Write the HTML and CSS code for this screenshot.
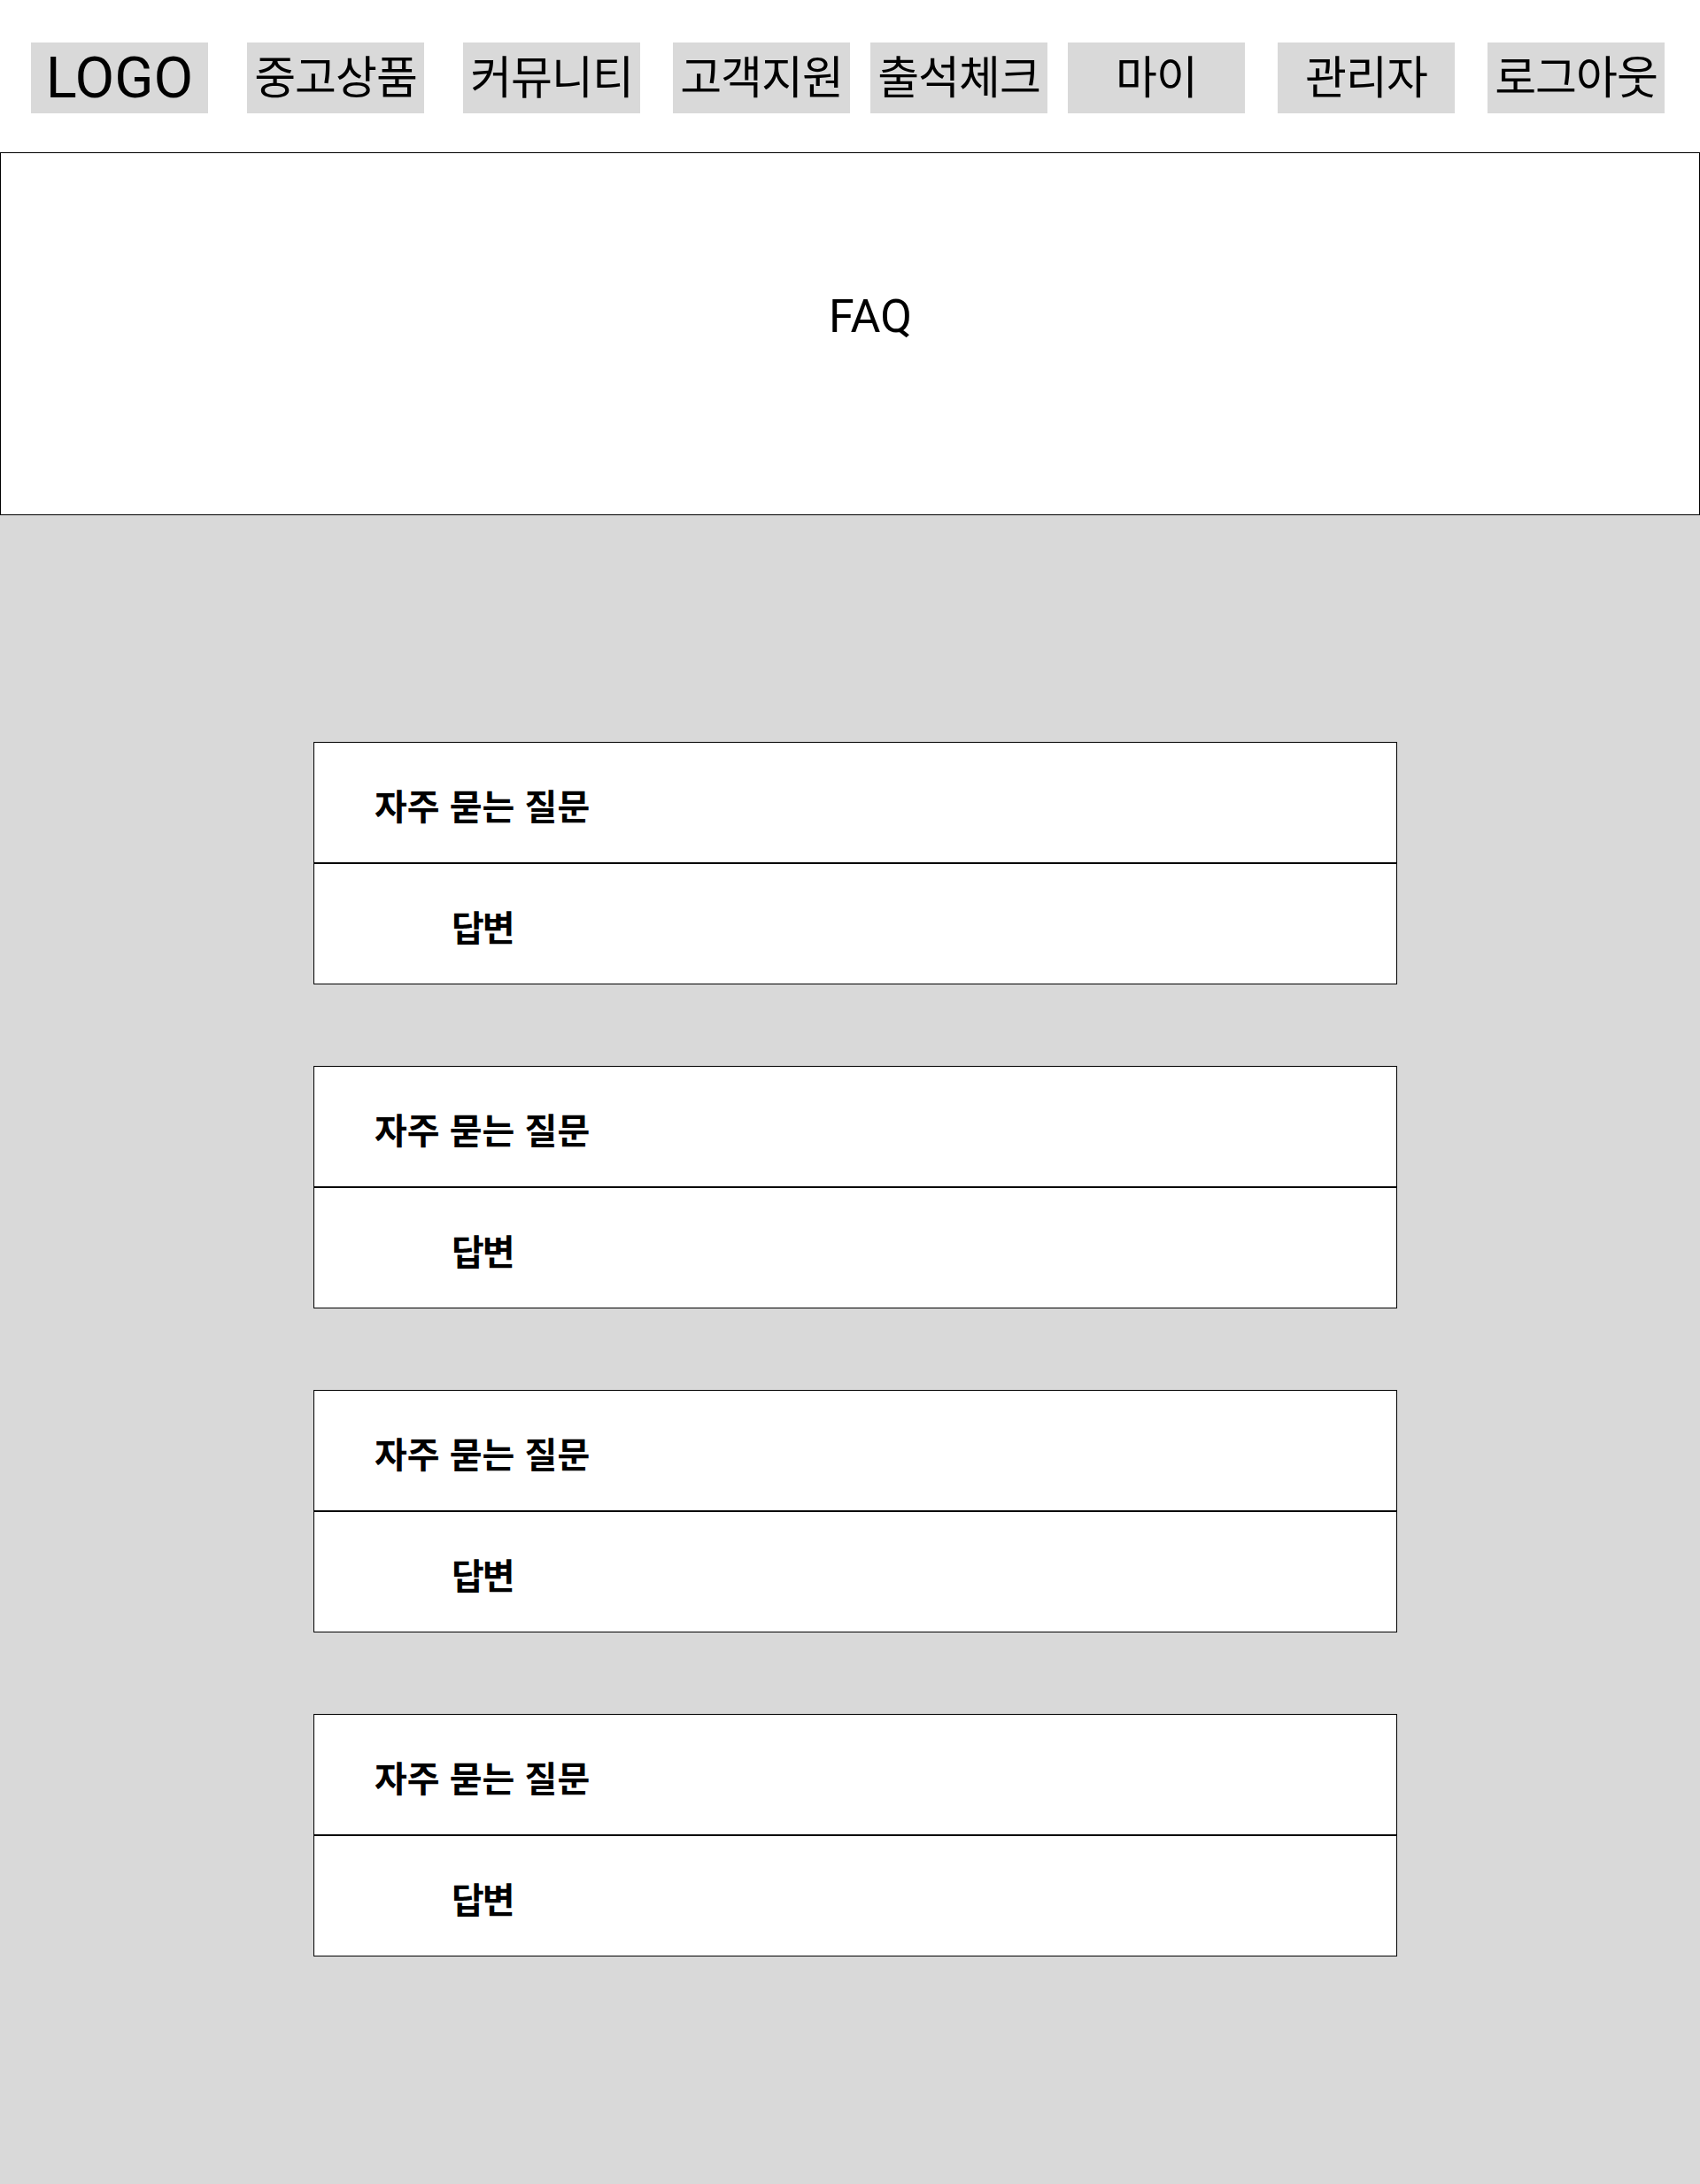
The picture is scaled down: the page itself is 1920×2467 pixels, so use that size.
FILE: index.html
```html
<!DOCTYPE html>
<html lang="ko">
<head>
<meta charset="utf-8">
<title>FAQ</title>
<link rel="stylesheet" href="styles.css">
</head>
<body>
  <nav class="topnav">
    <a class="nav-item nav-logo">LOGO</a>
    <a class="nav-item gap-lg">중고상품</a>
    <a class="nav-item gap-lg">커뮤니티</a>
    <a class="nav-item gap-md">고객지원</a>
    <a class="nav-item gap-sm">출석체크</a>
    <a class="nav-item gap-sm">마이</a>
    <a class="nav-item gap-md">관리자</a>
    <a class="nav-item gap-md">로그아웃</a>
  </nav>
  <header class="page-title">
    <h1 class="page-title-text">FAQ</h1>
  </header>
  <main class="faq-area">
    <div class="faq-list">
      <section class="faq-card">
        <div class="faq-row faq-q">자주 묻는 질문</div>
        <div class="faq-row faq-a">답변</div>
      </section>
      <section class="faq-card">
        <div class="faq-row faq-q">자주 묻는 질문</div>
        <div class="faq-row faq-a">답변</div>
      </section>
      <section class="faq-card">
        <div class="faq-row faq-q">자주 묻는 질문</div>
        <div class="faq-row faq-a">답변</div>
      </section>
      <section class="faq-card">
        <div class="faq-row faq-q">자주 묻는 질문</div>
        <div class="faq-row faq-a">답변</div>
      </section>
    </div>
  </main>
</body>
</html>
```

FILE: styles.css
```css
* {
  box-sizing: border-box;
}

html, body {
  margin: 0;
  padding: 0;
}

body {
  min-height: 100vh;
  display: flex;
  flex-direction: column;
  background: #ffffff;
  color: #000000;
  font-family: Roboto, "Noto Sans CJK KR", sans-serif;
}

.topnav {
  display: flex;
  align-items: flex-start;
  height: 172px;
  padding: 48px 0 0 35px;
  background: #ffffff;
}

.nav-item {
  width: 200px;
  height: 80px;
  flex: 0 0 200px;
  display: flex;
  align-items: center;
  justify-content: center;
  background: #d9d9d9;
  color: #000000;
  font-size: 51px;
  letter-spacing: -1px;
  line-height: 1;
  text-decoration: none;
}

.nav-logo {
  font-size: 65px;
  letter-spacing: 0;
}

.gap-lg { margin-left: 44px; }
.gap-md { margin-left: 37px; }
.gap-sm { margin-left: 23px; }

.page-title {
  height: 410px;
  border: 1px solid #000000;
  background: #ffffff;
  padding: 159px 0 0 46px;
}

.page-title-text {
  margin: 0;
  font-size: 52px;
  font-weight: 400;
  line-height: 1;
  text-align: center;
}

.faq-area {
  flex: 1;
  background: #d9d9d9;
  padding: 256px 0 120px 354px;
}

.faq-list {
  width: 1224px;
  display: flex;
  flex-direction: column;
  gap: 92px;
}

.faq-card {
  display: flex;
  flex-direction: column;
}

.faq-row {
  height: 137px;
  display: flex;
  align-items: center;
  background: #ffffff;
  border: 1px solid #000000;
  font-family: "Noto Sans CJK KR", sans-serif;
  font-size: 40px;
  font-weight: 700;
  letter-spacing: 0;
  line-height: 1;
  padding-top: 4px;
}

.faq-q {
  padding-left: 68px;
}

.faq-a {
  padding-left: 155px;
  letter-spacing: -2px;
}
```
